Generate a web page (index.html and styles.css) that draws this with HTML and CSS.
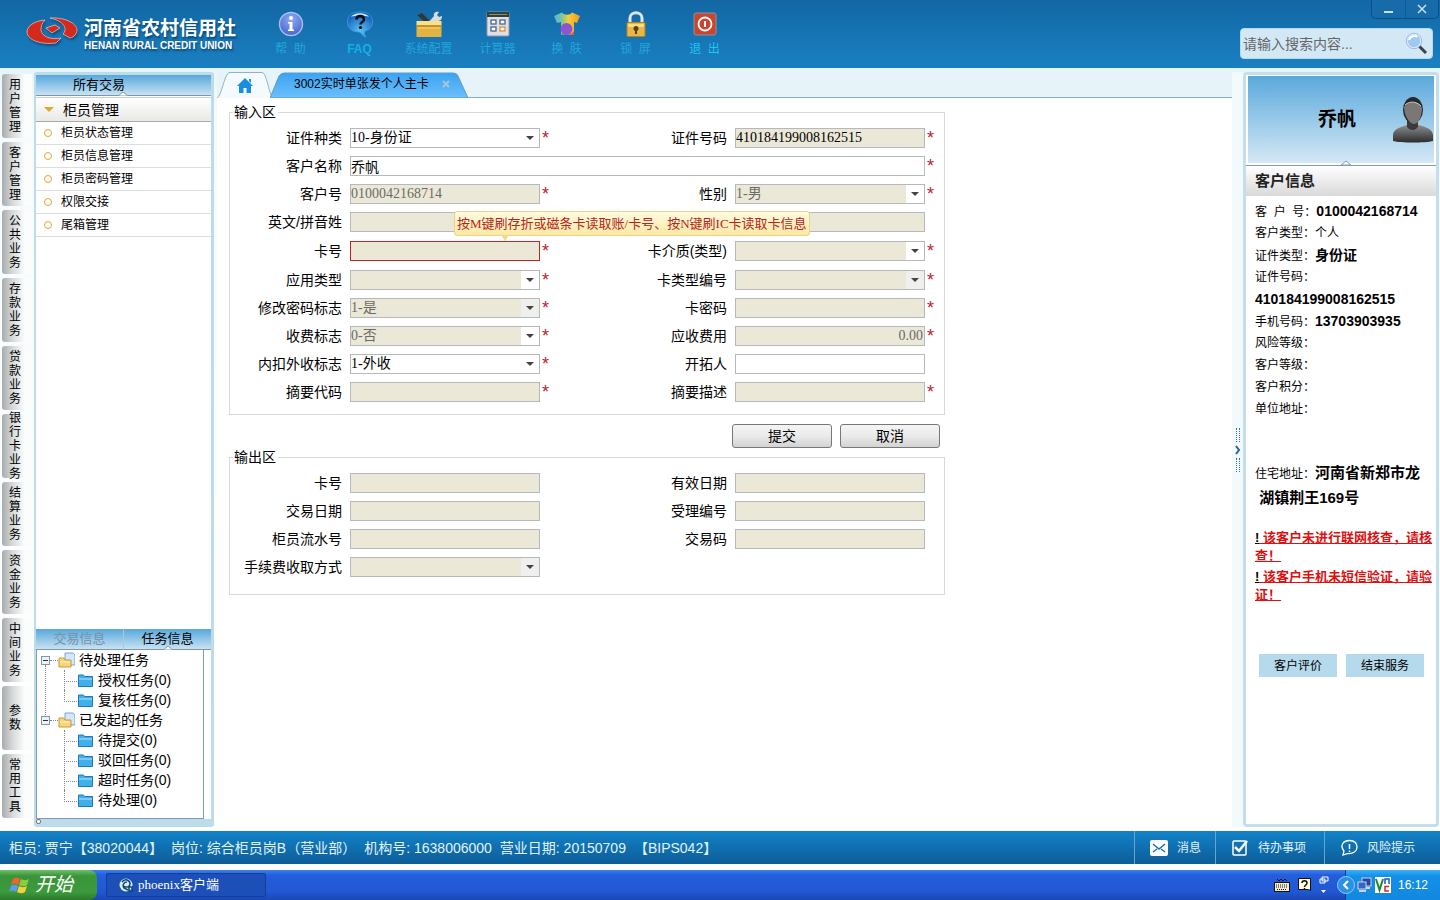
FILE: index.html
```html
<!DOCTYPE html>
<html lang="zh-CN">
<head>
<meta charset="utf-8">
<title>phoenix客户端</title>
<link rel="stylesheet" href="styles.css">
</head>
<body>
<header class="top">
  <div class="brand">
    <svg class="brand-mark" viewBox="0 0 52 30" aria-hidden="true">
      <g fill="#d42a1e" stroke="#f0b8ae" stroke-width="0.8">
        <path d="M19 3C8 4 1 9 1 15c0 8 14 13 29 11l5-5c-10 2-19-1-20-8 0-4 1-7 4-10z"/>
        <path d="M24 1c14-1 27 5 27 12 0 4-3 7-7 8l-7-4c5-5 1-13-13-16z"/>
        <path d="M20 11l9-3 5 3-8 5z"/>
      </g>
    </svg>
    <div class="brand-text">
      <strong class="brand-cn">河南省农村信用社</strong>
      <span class="brand-en">HENAN RURAL CREDIT UNION</span>
    </div>
  </div>
  <nav class="tools">
    <button class="tool" type="button">
      <svg viewBox="0 0 28 28" aria-hidden="true"><defs><radialGradient id="gi" cx=".5" cy=".3" r=".8"><stop offset="0" stop-color="#91aaf5"/><stop offset="1" stop-color="#3d5cc4"/></radialGradient></defs><circle cx="14" cy="14" r="11.5" fill="url(#gi)" stroke="#a9c0f4" stroke-width="1.4"/><circle cx="14" cy="8" r="2" fill="#fff"/><path d="M11 12h4.500v7.500H17V21h-6v-1.500h1.500v-6H11z" fill="#fff"/></svg>
      <span>帮&nbsp; 助</span>
    </button>
    <button class="tool tool-bold" type="button">
      <svg viewBox="0 0 28 28" aria-hidden="true"><defs><radialGradient id="gf" cx=".5" cy=".75" r=".8"><stop offset="0" stop-color="#59c3fb"/><stop offset="1" stop-color="#0a4fa9"/></radialGradient></defs><path d="M14 2C6 2 1.500 6 1.500 12S6 22 13 22c2 0 3 4 7 5-2-2-2-4-1-6 4-1 7.500-4 7.500-9C26.500 6 22 2 14 2z" fill="url(#gf)" stroke="#4aa6ea" stroke-width=".7"/><path d="M5 7c3-5 15-5 18 0-4-2-14-2-18 0z" fill="#cfeafc"/><path d="M10.500 9.500c0-4.500 7.500-4.500 7.500 0 0 2.500-3.500 2.500-3.500 5" fill="none" stroke="#111" stroke-width="2.600"/><circle cx="14.500" cy="17.500" r="1.600" fill="#111"/></svg>
      <span>FAQ</span>
    </button>
    <button class="tool" type="button">
      <svg viewBox="0 0 28 28" aria-hidden="true"><path d="M3 5l4-2 7 7-3 3-9-8z" fill="#30363a"/><path d="M13 13l6-7c-1-3 2-5 5-4l-2 3 2 2 3-1c0 4-2 5-5 5l-3 3z" fill="#d7dde1"/><path d="M1.500 11h25v4h-25z" fill="#f9e089"/><path d="M1.500 15h25v12h-25z" fill="#e3b341"/><path d="M1.500 15h25v2h-25z" fill="#c8902a"/><path d="M3 18h22" stroke="#f4d679"/></svg>
      <span>系统配置</span>
    </button>
    <button class="tool" type="button">
      <svg viewBox="0 0 28 28" aria-hidden="true"><rect x="3" y="2" width="22" height="24" rx="1" fill="#dde1e5" stroke="#8f989f"/><path d="M3 2h22v5H3z" fill="#34403c"/><path d="M5 4.500h18" stroke="#7e9370"/><g fill="#fff" stroke="#4d6192" stroke-width="1.300"><rect x="7" y="10" width="5" height="4"/><rect x="16" y="10" width="5" height="4"/><rect x="7" y="17" width="5" height="4"/><rect x="16" y="17" width="5" height="4" stroke="#e08a3a"/></g></svg>
      <span>计算器</span>
    </button>
    <button class="tool" type="button">
      <svg viewBox="0 0 28 28" aria-hidden="true"><defs><linearGradient id="gs" x1="0" y1="0" x2="1" y2="0"><stop offset="0" stop-color="#4fb2e2"/><stop offset=".35" stop-color="#8cc98e"/><stop offset=".55" stop-color="#f3cf3a"/><stop offset="1" stop-color="#f29a22"/></linearGradient></defs><path d="M9 2.500L1 6l3 7 4-1v12.500h13V12l3 1 3-7-8-3.500c-2 3-8 3-10 0z" fill="url(#gs)"/><circle cx="13.500" cy="19" r="6" fill="#8f55d0"/><path d="M17 25l4-4v4z" fill="#e2524f"/></svg>
      <span>换&nbsp; 肤</span>
    </button>
    <button class="tool" type="button">
      <svg viewBox="0 0 28 28" aria-hidden="true"><path d="M8 14V8c0-7 12-7 12 0v6" fill="none" stroke="#dfe5e8" stroke-width="3"/><rect x="5" y="12.500" width="18" height="14" rx="1" fill="#e8b847" stroke="#b8811d"/><path d="M6 14h16v3H6z" fill="#f7dc86"/><circle cx="14" cy="18.500" r="2.500" fill="#594010"/><path d="M13 19h2v5h-2z" fill="#594010"/></svg>
      <span>锁&nbsp; 屏</span>
    </button>
    <button class="tool tool-lit" type="button">
      <svg viewBox="0 0 28 28" aria-hidden="true"><rect x="3" y="3" width="22" height="22" rx="2" fill="#c9452f" stroke="#8f9498"/><circle cx="14" cy="14" r="6.500" fill="none" stroke="#fff" stroke-width="1.800"/><path d="M14 11v6" stroke="#fff" stroke-width="2"/></svg>
      <span>退&nbsp; 出</span>
    </button>
  </nav>
  <div class="top-right">
    <div class="win">
      <button type="button" aria-label="最小化"><svg viewBox="0 0 12 12"><path d="M1 9h9" stroke="#c5e2f5" stroke-width="2"/></svg></button>
      <button type="button" aria-label="关闭"><svg viewBox="0 0 12 12"><path d="M2 2l8 8M10 2l-8 8" stroke="#c5e2f5" stroke-width="1.500"/></svg></button>
    </div>
    <form class="search">
      <input type="text" placeholder="请输入搜索内容..." aria-label="搜索">
      <button type="button" aria-label="搜索"><svg viewBox="0 0 24 24"><path d="M14 14l7 7" stroke="#3d4348" stroke-width="3"/><circle cx="9" cy="9" r="7" fill="#9fc8f5" stroke="#dcecfb" stroke-width="1.600"/><path d="M4 8c1-4 6-5 8-3" stroke="#fff" stroke-width="2" fill="none"/><circle cx="9" cy="9" r="7.700" fill="none" stroke="#6f9cd6" stroke-width=".6"/></svg></button>
    </form>
  </div>
</header>

<div class="work">
  <nav class="rail">
    <button type="button">用<br>户<br>管<br>理</button>
    <button type="button">客<br>户<br>管<br>理</button>
    <button type="button">公<br>共<br>业<br>务</button>
    <button type="button">存<br>款<br>业<br>务</button>
    <button type="button">贷<br>款<br>业<br>务</button>
    <button type="button">银<br>行<br>卡<br>业<br>务</button>
    <button type="button">结<br>算<br>业<br>务</button>
    <button type="button">资<br>金<br>业<br>务</button>
    <button type="button">中<br>间<br>业<br>务</button>
    <button type="button">参<br>数</button>
    <button type="button">常<br>用<br>工<br>具</button>
  </nav>

  <aside class="side">
    <h2 class="side-head">所有交易<svg class="notch" viewBox="0 0 10 5"><path d="M0 5l5-4 5 4z" fill="#fff" stroke="#7d9db0"/></svg></h2>
    <h3 class="side-group"><i class="caret"></i>柜员管理</h3>
    <ul class="side-list">
      <li><a href="#">柜员状态管理</a></li>
      <li><a href="#">柜员信息管理</a></li>
      <li><a href="#">柜员密码管理</a></li>
      <li><a href="#">权限交接</a></li>
      <li><a href="#">尾箱管理</a></li>
    </ul>
    <div class="side-tabs">
      <button type="button">交易信息</button>
      <button type="button" class="on">任务信息<svg class="notch" viewBox="0 0 10 5"><path d="M0 5l5-4 5 4z" fill="#fff" stroke="#7d9db0"/></svg></button>
    </div>
    <ul class="tree">
      <li class="root"><button type="button" class="fold" aria-label="折叠"></button><i class="dash"></i><svg class="folder" viewBox="0 0 17 16"><path d="M7 1h8l2 2v10H7z" fill="#d5e7fa" stroke="#7fa3d4"/><path d="M1 6h5l1 2h6v7H1z" fill="#f7d67b" stroke="#c89b35"/><path d="M2 10h10" stroke="#fff0b8"/></svg><span>待处理任务</span>
        <ul>
          <li><svg viewBox="0 0 15 13"><path d="M.5 1h5l1 1.500h8v10H.5z" fill="#3fb0ea" stroke="#1f78bd"/><path d="M1 5h13" stroke="#b5e4fb"/></svg>授权任务(0)</li>
          <li><svg viewBox="0 0 15 13"><path d="M.5 1h5l1 1.500h8v10H.5z" fill="#3fb0ea" stroke="#1f78bd"/><path d="M1 5h13" stroke="#b5e4fb"/></svg>复核任务(0)</li>
        </ul>
      </li>
      <li class="root"><button type="button" class="fold" aria-label="折叠"></button><i class="dash"></i><svg class="folder" viewBox="0 0 17 16"><path d="M7 1h8l2 2v10H7z" fill="#d5e7fa" stroke="#7fa3d4"/><path d="M1 6h5l1 2h6v7H1z" fill="#f7d67b" stroke="#c89b35"/><path d="M2 10h10" stroke="#fff0b8"/></svg><span>已发起的任务</span>
        <ul>
          <li><svg viewBox="0 0 15 13"><path d="M.5 1h5l1 1.500h8v10H.5z" fill="#3fb0ea" stroke="#1f78bd"/><path d="M1 5h13" stroke="#b5e4fb"/></svg>待提交(0)</li>
          <li><svg viewBox="0 0 15 13"><path d="M.5 1h5l1 1.500h8v10H.5z" fill="#3fb0ea" stroke="#1f78bd"/><path d="M1 5h13" stroke="#b5e4fb"/></svg>驳回任务(0)</li>
          <li><svg viewBox="0 0 15 13"><path d="M.5 1h5l1 1.500h8v10H.5z" fill="#3fb0ea" stroke="#1f78bd"/><path d="M1 5h13" stroke="#b5e4fb"/></svg>超时任务(0)</li>
          <li><svg viewBox="0 0 15 13"><path d="M.5 1h5l1 1.500h8v10H.5z" fill="#3fb0ea" stroke="#1f78bd"/><path d="M1 5h13" stroke="#b5e4fb"/></svg>待处理(0)</li>
        </ul>
      </li>
    </ul>
    <i class="grip"></i>
  </aside>

  <main class="main">
    <div class="tabs">
      <button class="tab-home" type="button" aria-label="首页">
        <svg class="shape" viewBox="0 0 56 26" preserveAspectRatio="none"><path d="M0 26C5 24 7 1 13 .5H45C50 1 51 20 56 26" fill="#f4fafd" stroke="#8db4c2"/></svg>
        <svg class="home" viewBox="0 0 16 15"><path d="M8 0l8 8h-2v7H9.500v-5h-3v5H2V8H0z" fill="#188fdc"/><path d="M12 1h2v4l-2-2z" fill="#188fdc"/></svg>
      </button>
      <div class="tab-doc">
        <svg class="shape" viewBox="0 0 198 26" preserveAspectRatio="none"><defs><linearGradient id="gt" x1="0" y1="0" x2="0" y2="1"><stop offset="0" stop-color="#3ba3f2"/><stop offset="1" stop-color="#6cbffc"/></linearGradient></defs><path d="M0 26L9 4Q11 1 14 1H183Q187 1 188 4L198 26z" fill="url(#gt)" stroke="#5a9fcb"/></svg>
        <span class="tab-name">3002实时单张发个人主卡</span>
        <button type="button" class="tab-x" aria-label="关闭标签"><svg viewBox="0 0 8 8"><path d="M1 1l6 6M7 1L1 7" stroke="#a9c4d8" stroke-width="2"/></svg></button>
      </div>
    </div>
    <form class="form">
      <fieldset>
        <legend>输入区</legend>
        <div class="grid grid-in">
          <label for="a1">证件种类</label><span class="sel"><select id="a1"><option>10-身份证</option></select></span><b>*</b>
          <label for="a2">证件号码</label><input id="a2" class="tan" value="410184199008162515"><b>*</b>
          <label for="a3">客户名称</label><input id="a3" class="wide" value="乔帆"><b>*</b>
          <label for="a4">客户号</label><input id="a4" class="tan dim" value="0100042168714" readonly><b>*</b>
          <label for="a5">性别</label><span class="sel tan"><select id="a5" class="dim"><option>1-男</option></select></span><b>*</b>
          <label for="a6">英文/拼音姓</label><input id="a6" class="tan wide" readonly><b></b>
          <label for="a7">卡号</label><span class="card"><input id="a7" class="tan bad"><span class="tip" role="tooltip">按M键刷存折或磁条卡读取账/卡号、按N键刷IC卡读取卡信息</span></span><b>*</b>
          <label for="a8">卡介质(类型)</label><span class="sel tan"><select id="a8"><option></option></select></span><b>*</b>
          <label for="a9">应用类型</label><span class="sel tan"><select id="a9"><option></option></select></span><b>*</b>
          <label for="a10">卡类型编号</label><span class="sel tan off"><select id="a10"><option></option></select></span><b>*</b>
          <label for="a11">修改密码标志</label><span class="sel tan off"><select id="a11" class="dim"><option>1-是</option></select></span><b>*</b>
          <label for="a12">卡密码</label><input id="a12" class="tan" type="password"><b>*</b>
          <label for="a13">收费标志</label><span class="sel tan"><select id="a13" class="dim"><option>0-否</option></select></span><b>*</b>
          <label for="a14">应收费用</label><input id="a14" class="tan dim num" value="0.00" readonly><b>*</b>
          <label for="a15">内扣外收标志</label><span class="sel"><select id="a15"><option>1-外收</option></select></span><b>*</b>
          <label for="a16">开拓人</label><input id="a16"><b></b>
          <label for="a17">摘要代码</label><input id="a17" class="tan"><b>*</b>
          <label for="a18">摘要描述</label><input id="a18" class="tan"><b>*</b>
        </div>
      </fieldset>
      <div class="actions">
        <button type="button">提交</button>
        <button type="button">取消</button>
      </div>
      <fieldset>
        <legend>输出区</legend>
        <div class="grid grid-out">
          <label for="b1">卡号</label><input id="b1" class="tan" readonly><b></b>
          <label for="b2">有效日期</label><input id="b2" class="tan" readonly><b></b>
          <label for="b3">交易日期</label><input id="b3" class="tan" readonly><b></b>
          <label for="b4">受理编号</label><input id="b4" class="tan" readonly><b></b>
          <label for="b5">柜员流水号</label><input id="b5" class="tan" readonly><b></b>
          <label for="b6">交易码</label><input id="b6" class="tan" readonly><b></b>
          <label for="b7">手续费收取方式</label><span class="sel tan off"><select id="b7"><option></option></select></span><b></b>
        </div>
      </fieldset>
    </form>
  </main>

  <button class="split" type="button" aria-label="收起">
    <i></i><svg viewBox="0 0 6 10"><path d="M1 1l3 4-3 4" fill="none" stroke="#23659b" stroke-width="2"/></svg><i></i>
  </button>

  <aside class="cust">
    <div class="cust-card">
      <strong>乔帆</strong>
      <svg class="avatar" viewBox="0 0 42 48" aria-hidden="true"><defs><linearGradient id="ga" x1="0" y1="0" x2="0" y2="1"><stop offset="0" stop-color="#8e8e8e"/><stop offset="1" stop-color="#2c2c2c"/></linearGradient></defs><path d="M1 45V39c0-6 8-8 14-10h12c6 2 14 4 14 10v6c-8 2-32 2-40 0z" fill="url(#ga)"/><path d="M15 22h11v9c-3 4-8 4-11 0z" fill="#3b3b3b"/><ellipse cx="21" cy="14" rx="10" ry="13" fill="#26292b"/><path d="M12 11c3-6 14-7 18 1 0 7-3 16-8 16s-10-9-10-17z" fill="#7b7775"/><path d="M13 9c4-4 11-4 16 1" fill="none" stroke="#cfcac6"/></svg>
      <svg class="notch" viewBox="0 0 10 5"><path d="M0 5l5-4 5 4z" fill="#fff" stroke="#7d9db0"/></svg>
    </div>
    <h2>客户信息</h2>
    <div class="info">
      <p>客&nbsp; 户&nbsp; 号：<b>0100042168714</b></p>
      <p>客户类型：个人</p>
      <p>证件类型：<b>身份证</b></p>
      <p>证件号码：</p>
      <p><b>410184199008162515</b></p>
      <p>手机号码：<b>13703903935</b></p>
      <p>风险等级：</p>
      <p>客户等级：</p>
      <p>客户积分：</p>
      <p>单位地址：</p>
      <p class="addr">住宅地址：<b>河南省新郑市龙<br>&nbsp;湖镇荆王169号</b></p>
    </div>
    <div class="warn">
      <p>!<a href="#"> 该客户未进行联网核查，请核<br>查！</a></p>
      <p>!<a href="#"> 该客户手机未短信验证，请验<br>证！</a></p>
    </div>
    <div class="cust-actions">
      <button type="button">客户评价</button>
      <button type="button">结束服务</button>
    </div>
  </aside>
</div>

<footer class="status">
  <div class="status-text">
    <span>柜员: 贾宁【38020044】</span>
    <span>岗位: 综合柜员岗B（营业部）</span>
    <span>机构号: 1638006000</span>
    <span>营业日期: 20150709</span>
    <span>【BIPS042】</span>
  </div>
  <button type="button" class="s1"><svg viewBox="0 0 20 18"><rect x="1" y="1" width="18" height="16" rx="2" fill="#fff"/><path d="M4 5l6 5 6-5M4 13l4-3M16 13l-4-3" fill="none" stroke="#1872b0" stroke-width="1.500"/></svg>消息</button>
  <button type="button" class="s2"><svg viewBox="0 0 18 18"><rect x="2" y="2" width="13" height="14" rx="1" fill="none" stroke="#fff" stroke-width="1.500"/><path d="M4 8l4 4 8-10" fill="none" stroke="#fff" stroke-width="2.500"/></svg>待办事项</button>
  <button type="button" class="s3"><svg viewBox="0 0 18 18"><path d="M3 16l1-4C-1 6 4 1.500 9.500 1.500S17 5 17 8.500 13 15 8 14.500z" fill="none" stroke="#fff" stroke-width="1.300"/><path d="M9.500 5v5M9.500 11.500v1.500" stroke="#fff" stroke-width="1.500"/></svg>风险提示</button>
</footer>

<div class="taskbar">
  <button type="button" class="start">
    <svg viewBox="0 0 22 20" aria-hidden="true"><path d="M4 4c3-2 5-1 7 0l-2 6c-2-1-4-2-7 0z" fill="#f0642f"/><path d="M12 4c2 1 4 2 8 0l-2 6c-3 2-6 1-8 0z" fill="#8fcb3d"/><path d="M2 11c3-2 5-1 7 0l-2 6c-2-1-4-2-7 0z" fill="#5b9cf0"/><path d="M10 11c2 1 4 2 8 0l-2 6c-3 2-6 1-8 0z" fill="#f9cf3c"/></svg>
    <span>开始</span>
  </button>
  <button type="button" class="task">
    <svg viewBox="0 0 14 14" aria-hidden="true"><circle cx="7" cy="7" r="6.500" fill="#d9eefb"/><path d="M3 4c3-4 8-2 8 2 0 3-4 4-6 2M8 4c-3 0-5 3-3 6l4 2M10 9h4v5h-4z" fill="none" stroke="#12456f" stroke-width="1.500"/></svg>
    <span>phoenix客户端</span>
  </button>
  <div class="tools-lang">
    <svg class="kb" viewBox="0 0 16 14"><path d="M3 1l2 2 2-2 2 2 2-2 2 2" fill="none" stroke="#111"/><rect x=".5" y="4.500" width="15" height="9" fill="#f3ecd2" stroke="#111"/><path d="M2 7h12M2 9h12M3 11.500h10" stroke="#111" stroke-dasharray="1 1"/></svg>
    <svg class="hp" viewBox="0 0 13 14"><path d="M.5.5h12v12l-2-1H.5z" fill="#fffbe0" stroke="#111"/><path d="M4 5c0-3 5-3 5 0 0 2-2.500 2-2.500 4M6.500 10v1" fill="none" stroke="#111" stroke-width="1.500"/></svg>
    <svg class="rs" viewBox="0 0 10 18"><path d="M3 1h6v4H3zM1 3h5v4H1z" fill="#245edb" stroke="#fff"/><path d="M2 14h5l-2.500 3z" fill="#fff"/></svg>
  </div>
  <div class="tray">
    <button type="button" aria-label="展开"><svg viewBox="0 0 18 18"><circle cx="9" cy="9" r="8.500" fill="#2b91e6" stroke="#8cc8f5"/><path d="M11 5L7 9l4 4" fill="none" stroke="#fff" stroke-width="2"/></svg></button>
    <svg class="net" viewBox="0 0 16 16"><rect x="5" y="1" width="9" height="8" fill="#2348a0" stroke="#cdd6e2"/><path d="M8 10h5v2H8z" fill="#cdd6e2"/><rect x="1" y="5" width="8" height="7" fill="#3565c8" stroke="#cdd6e2"/><path d="M2 14h7" stroke="#cdd6e2" stroke-width="2"/></svg>
    <svg class="vnc" viewBox="0 0 16 16"><rect width="16" height="16" fill="#fff"/><path d="M1 2l3.500 11L8 2" fill="none" stroke="#1d8a2e" stroke-width="2"/><path d="M10 7V2h4v5" fill="none" stroke="#2450c8" stroke-width="1.500"/><path d="M14 9.500h-4V14h4" fill="none" stroke="#d2282c" stroke-width="1.500"/></svg>
    <time>16:12</time>
  </div>
</div>
</body>
</html>
```
FILE: styles.css
```css
* { box-sizing: border-box; }
body {
  margin: 0;
  min-height: 100vh;
  display: flex;
  flex-direction: column;
  font: 14px/20px "Liberation Sans", "Noto Sans CJK SC", sans-serif;
  color: #000;
  background: #fbfeff;
}
button { font: inherit; color: inherit; border: 0; padding: 0; margin: 0; background: none; }
ul, p, h2, h3 { margin: 0; padding: 0; list-style: none; font-weight: normal; }
a { color: inherit; text-decoration: none; }
svg { display: block; flex: none; }

.top {
  display: flex;
  height: 68px;
  background: linear-gradient(#1267a3, #1a80c2);
}
.brand { display: flex; width: 256px; padding: 16px 0 0 26px; gap: 6px; }
.brand-mark { width: 52px; height: 32px; filter: drop-shadow(1px 2px 1px #0a4f80); }
.brand-text { color: #fff; white-space: nowrap; text-shadow: 1px 2px 2px #0a4676; }
.brand-cn { display: block; font-size: 19px; line-height: 25px; }
.brand-en { display: block; font-size: 10px; line-height: 10px; font-weight: bold; }
.tools { display: flex; flex: 1; }
.tool {
  width: 69px;
  padding-top: 10px;
  display: flex;
  flex-direction: column;
  align-items: center;
  gap: 2px;
  font-size: 12px;
  line-height: 18px;
  color: #22a5da;
}
.tool svg { width: 28px; height: 28px; }
.tool-bold { font-weight: bold; color: #15afe8; }
.tool-lit { color: #1fc5f0; }
.top-right { display: flex; flex-direction: column; align-items: flex-end; padding-right: 7px; }
.win { display: flex; height: 19px; margin-right: -6px; background: #176ba9; border: 1px solid #0b4f85; border-top: 0; border-radius: 0 0 5px 5px; }
.win button { width: 33px; display: grid; place-items: center; }
.win button + button { border-left: 1px solid #0f5b94; }
.win svg { width: 12px; height: 12px; }
.search { display: flex; align-items: center; width: 193px; height: 31px; margin-top: 9px; padding: 0 3px 0 2px; background: #d2e8f5; border: 1px solid #b5d8ee; border-radius: 4px; }
.search input { flex: 1; min-width: 0; padding: 0; border: 0; outline: 0; background: none; font: inherit; }
.search input::placeholder { color: #666; opacity: 1; }
.search svg { width: 24px; height: 24px; }

.work {
  flex: 1;
  display: flex;
  padding: 4px 1px 4px 0;
  background: linear-gradient(#e6f4f9, #f5fbfd 40px, #fff 100%);
}
.rail { display: flex; flex-direction: column; gap: 4px; width: 34px; padding: 2px 2px 0; }
.rail button {
  height: 64px;
  padding-right: 4px;
  display: grid;
  place-content: center;
  font-size: 12px;
  line-height: 14px;
  border-radius: 3px 0 0 3px;
  background: linear-gradient(90deg, #a8acae, #d6d8d9 35%, #fbfcfc 75%);
}

.side {
  position: relative;
  display: flex;
  flex-direction: column;
  width: 180px;
  border: 2px solid #bcdcea;
  border-width: 3px 3px 8px 2px;
  border-radius: 3px;
  background: #fff;
}
.side-head, .side-tabs button {
  position: relative;
  background: linear-gradient(#58a8dc, #c8e2f3);
  border-bottom: 1px solid #7f96a5;
  font-size: 13px;
  line-height: 20px;
}
.side-head { padding-left: 37px; margin-bottom: 1px; }
.notch { position: absolute; width: 10px; height: 5px; bottom: -1px; left: 50%; }
.side-head .notch { left: 82px; }
.side-tabs .notch { left: 39px; }
.side-group {
  display: flex;
  align-items: center;
  gap: 9px;
  height: 25px;
  padding-left: 8px;
  font-size: 14px;
  border-top: 1px solid #ccc;
  border-bottom: 1px solid #aaa;
  background: linear-gradient(#fff, #e9e9e6);
}
.caret { border: 5px solid transparent; border-top-color: #e2a52f; border-bottom: 0; }
.side-list { flex: 1; }
.side-list a { display: flex; align-items: center; gap: 9px; height: 23px; padding-left: 8px; font-size: 12px; border-bottom: 1px solid #ddd; }
.side-list a::before { content: ""; width: 6px; height: 6px; border: 1px solid #e2a52f; border-radius: 50%; }
.side-tabs { display: flex; }
.side-tabs button { flex: 1; color: #7593a5; }
.side-tabs button.on { color: #000; border-left: 1px solid #a9cadd; }
.tree { width: 168px; height: 169px; border: 1px solid #7f9db9; border-top: 0; background: #fff; white-space: nowrap; }
.root { position: relative; display: grid; grid-template-columns: 9px 8px 17px 1fr; align-items: center; padding-left: 4px; line-height: 20px; }
.root > span { padding-left: 4px; }
.root:first-child::before { content: ""; position: absolute; left: 8px; top: 15px; bottom: -5px; border-left: 1px dotted #888; }
.fold { width: 9px; height: 9px; border: 1px solid #7b98b5; background: linear-gradient(#333, #333) center / 5px 1px no-repeat #eef2f4; }
.dash { border-top: 1px dotted #888; }
.folder { width: 17px; height: 16px; }
.root ul { grid-column: 1 / -1; padding-left: 23px; }
.root ul li { position: relative; display: flex; align-items: center; gap: 5px; height: 20px; padding-left: 14px; }
.root ul li::before { content: ""; position: absolute; left: 0; top: 0; width: 12px; height: 11px; border: 1px dotted #888; border-width: 0 0 1px 1px; }
.root ul li:not(:last-child)::after { content: ""; position: absolute; left: 0; top: 0; bottom: 0; border-left: 1px dotted #888; }
.root ul svg { width: 15px; height: 13px; }
.grip { position: absolute; left: 0; bottom: -5px; width: 5px; height: 5px; border: 1px solid #777; border-radius: 2px; background: #fff; }

.main { flex: 1; display: flex; flex-direction: column; min-width: 0; margin-left: 3px; }
.tabs { display: flex; height: 26px; border-bottom: 1px solid #86b0bf; background: #e6f3f8; }
.shape { position: absolute; left: 0; top: 0; width: 100%; height: 100%; }
.tab-home, .tab-doc { position: relative; height: 26px; display: flex; align-items: center; }
.tab-home { width: 56px; justify-content: center; }
.home { position: relative; width: 16px; height: 15px; }
.tab-doc { width: 198px; margin-left: -3px; padding-left: 24px; gap: 13px; font-size: 12px; line-height: 24px; align-items: flex-start; }
.tab-name, .tab-x { position: relative; }
.tab-x { height: 24px; display: grid; place-items: center; }
.tab-x svg { width: 8px; height: 8px; }
.form { flex: 1; padding: 5px 12px; background: #fff; }
fieldset { max-width: 716px; margin: 0; padding: 7px 0 4px; border: 1px solid #d9d9d9; min-width: 0; }
legend { margin-left: 3px; padding: 0 2px 0 1px; line-height: 18px; }
.grid { display: grid; grid-template-columns: 120px 190px 18px 177px 190px 18px; align-items: start; line-height: 20px; }
.grid-in { grid-template-rows: repeat(3, 28px) repeat(2, 29px) repeat(5, 28px); }
.grid-out { grid-auto-rows: 28px; padding-bottom: 5px; }
.grid label { padding-right: 8px; text-align: right; }
.grid b { padding-left: 2px; font: 18px/20px "Liberation Sans", sans-serif; color: #c22030; }
.grid input, .sel {
  width: 100%;
  height: 20px;
  padding: 0;
  border: 1px solid #b6b9bb;
  border-radius: 0;
  background: #fff;
  color: #000;
  outline: 0;
  font: 14px/18px "Liberation Serif", "Noto Sans CJK SC", serif;
}
.grid .wide { grid-column: span 4; }
.grid .tan { background: #ebe8d8; }
.grid .dim { color: #6b6b66; }
.grid .num { padding-right: 1px; text-align: right; }
.grid .bad { border-color: #c02525; }
.sel { position: relative; display: flex; }
.sel select { flex: 1; min-width: 0; padding: 0; border: 0; outline: 0; appearance: none; background: none; font: inherit; color: #000; }
.sel::before { content: ""; position: absolute; right: 0; top: 0; width: 18px; height: 18px; background: #fff; }
.sel.off::before { background: #efefed; }
.sel::after { content: ""; position: absolute; right: 5px; top: 7px; border: 4px solid transparent; border-top-color: #444; border-bottom: 0; }
.card { position: relative; height: 20px; display: flex; }
.tip {
  position: absolute;
  left: 104px;
  bottom: 25px;
  z-index: 2;
  padding: 0 2px;
  border: 1px solid #ecd28a;
  border-radius: 3px;
  background: linear-gradient(#fffbe0, #fbe9a4);
  color: #b5261e;
  font: 13px/23px "Liberation Serif", "Noto Sans CJK SC", serif;
  white-space: nowrap;
}
.tip::after { content: ""; position: absolute; left: 46px; top: 100%; border: 4px solid transparent; border-top: 6px solid #f6d98c; border-bottom: 0; }
.actions { display: flex; justify-content: flex-end; gap: 8px; max-width: 716px; padding: 9px 5px 0 0; }
.actions button { width: 100px; height: 24px; line-height: 20px; border: 1px solid #777; border-radius: 3px; background: linear-gradient(#f5f5f5, #eaeaea 50%, #d3d3d3); }

.split { width: 11px; display: flex; flex-direction: column; align-items: center; justify-content: center; gap: 3px; background: #f2fafd; }
.split i { width: 4px; height: 14px; border: 1px dotted #3d6f93; border-width: 0 1px; }
.split svg { width: 6px; height: 10px; }

.cust { width: 196px; border: 3px solid #c4dfeb; border-radius: 4px; background: #fff; }
.cust-card {
  position: relative;
  display: flex;
  align-items: center;
  justify-content: flex-end;
  height: 90px;
  border: 2px solid #fff;
  border-width: 1px 2px 2px;
  box-shadow: 0 1px #7d9db0;
  background: linear-gradient(#5aa9dc, #d5e8f5);
}
.cust-card strong { flex: 1; padding-left: 34px; font-size: 19px; text-align: center; }
.avatar { width: 42px; height: 48px; }
.cust-card .notch { bottom: -2px; }
.cust h2 { margin-top: 1px; padding-left: 9px; font-size: 15px; line-height: 30px; font-weight: bold; color: #222; background: linear-gradient(#fff, #d9d9d9); }
.info, .warn { font-family: "Liberation Sans", "Noto Sans CJK TC", "Noto Sans CJK SC", sans-serif; }
.info { padding: 4px 0 0 9px; font-size: 12px; line-height: 22px; white-space: nowrap; }
.info p { height: 22px; }
.info b { font-size: 14px; }
.info p.addr { height: 46px; margin-top: 41px; line-height: 23px; }
.info .addr b { font-size: 15px; }
.warn { margin: 22px 0 0 9px; font-size: 13px; line-height: 18px; white-space: nowrap; }
.warn p { font-weight: bold; text-decoration: underline; height: 36px; }
.warn p + p { margin-top: 3px; }
.warn a { color: #e01010; text-decoration: underline; }
.cust-actions { display: flex; gap: 9px; margin: 50px 0 0 13px; }
.cust-actions button { width: 78px; height: 23px; font-size: 12px; background: #b4daec; }

.status { display: flex; height: 33px; background: linear-gradient(#1283c9, #0d5c97); color: #e2f3fb; }
.status-text { flex: 1; display: flex; align-items: center; gap: 8px; padding-left: 9px; white-space: nowrap; }
.status button { display: flex; align-items: center; gap: 8px; padding-left: 14px; font-size: 12px; border-left: 1px solid #5fa8d4; }
.status button svg { width: 20px; height: 18px; }
.s1 { width: 81px; }
.s2 { width: 109px; }
.s3 { width: 116px; }

.taskbar {
  display: flex;
  height: 30px;
  margin-top: 6px;
  background: linear-gradient(#3f80ee, #245edb 5px, #2157d3 22px, #1a47b4);
  color: #fff;
}
.start { display: flex; align-items: center; gap: 4px; width: 97px; padding-left: 9px; border-radius: 0 8px 8px 0; background: linear-gradient(#6fbf6a, #3a943a 6px, #3c9a3c 22px, #2b7a2b); font-size: 19px; font-style: italic; }
.start svg { width: 22px; height: 20px; }
.task { display: flex; align-items: center; gap: 5px; width: 160px; margin: 3px 0 3px 9px; padding-left: 12px; border: 1px solid #123f9a; border-radius: 2px; background: #1d4fb8; font: 13px/20px "Liberation Serif", "Noto Sans CJK SC", serif; }
.task svg { width: 14px; height: 14px; }
.tools-lang { display: flex; flex: 1; justify-content: flex-end; align-items: center; gap: 8px; padding-right: 16px; }
.kb { width: 16px; height: 14px; }
.hp { width: 13px; height: 14px; }
.rs { width: 10px; height: 18px; }
.tray { display: flex; align-items: center; width: 95px; gap: 2px; border-left: 1px solid #0c3f9a; background: linear-gradient(#3db0f5, #1290e8 6px, #1288e0); font: 12px/20px "Liberation Sans", sans-serif; }
.tray button { margin-left: -9px; }
.tray button svg { width: 18px; height: 18px; }
.net, .vnc { width: 16px; height: 16px; }
.tray time { padding-left: 5px; }
```
